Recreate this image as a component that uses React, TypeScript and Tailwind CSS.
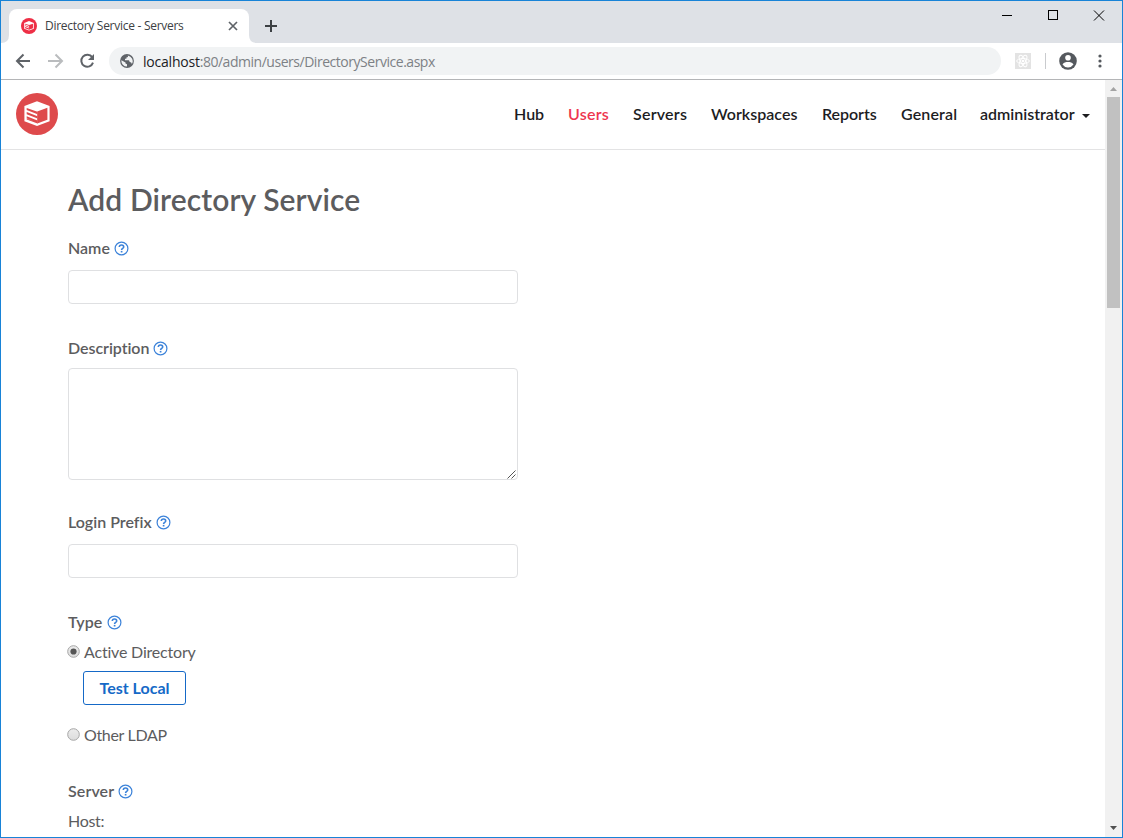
import type { ReactNode } from 'react';

const navItems = [
  { label: 'Hub', width: 'w-[30px]', spacing: 'tracking-[0px]' },
  { label: 'Users', width: 'w-[41px]', spacing: 'tracking-[0.25px]', active: true },
  { label: 'Servers', width: 'w-[54px]', spacing: 'tracking-[0.22px]' },
  { label: 'Workspaces', width: 'w-[87px]', spacing: 'tracking-[0.02px]' },
  { label: 'Reports', width: 'w-[55px]', spacing: 'tracking-[-0.05px]' },
  { label: 'General', width: 'w-[56px]', spacing: 'tracking-[0.14px]' },
];

function Logo({ className, color }: { className: string; color: string }) {
  return (
    <svg className={className} viewBox="0 0 42 42">
      <circle cx="21" cy="21" r="21" fill={color} />
      <path d="M21 8.200 33.600 13V28.200L21 33 8.400 28.200V13Z" fill="#fff" />
      <path d="M21.200 18.600 31.400 14.800V26.700L21.200 30.600Z" fill={color} />
      <path d="M10.700 14.900 21.500 18.700V21.200L10.700 16.900ZM10.700 19 21.500 23.300V25.500L10.700 21.200ZM10.700 23.300 21.500 27.600V30.600L10.700 26.600V25.500L18 28.200 10.700 25.300Z" fill={color} />
    </svg>
  );
}

function HelpIcon() {
  return (
    <svg className="size-[15px] shrink-0" viewBox="0 0 15 15" fill="none" stroke="#3b82d9">
      <circle cx="7.5" cy="7.5" r="6.4" strokeWidth="1.2" />
      <path d="M5.3 6.1c0-1.4.9-2.1 2.2-2.1s2.2.8 2.2 1.9c0 1.5-2.1 1.5-2.1 3" strokeWidth="1.6" />
      <path d="M7.6 9.9v1.6" strokeWidth="1.7" />
    </svg>
  );
}

function FieldLabel({ children, className }: { children: ReactNode; className: string }) {
  return (
    <div className="flex h-6 items-center gap-1 text-[16px] leading-6 font-semibold text-[#5c5c5e]">
      <span className={`shrink-0 whitespace-nowrap ${className}`}>{children}</span>
      <HelpIcon />
    </div>
  );
}

function Radio({ checked = false }: { checked?: boolean }) {
  return (
    <svg className="mb-[2px] -ml-px size-[13px] shrink-0" viewBox="0 0 13 13">
      <defs>
        <linearGradient id="radioFill" x1="0" y1="0" x2="0" y2="1">
          <stop offset="0" stopColor="#ececec" />
          <stop offset="1" stopColor="#dcdcdc" />
        </linearGradient>
      </defs>
      <circle cx="6.5" cy="6.5" r="5.8" fill="url(#radioFill)" stroke="#a6a6a6" />
      {checked && <circle cx="6.5" cy="6.5" r="3.1" fill="#555" />}
    </svg>
  );
}

function TabStrip() {
  return (
    <div className="flex h-[42px] shrink-0 items-end bg-[#dee1e6]">
      <svg className="h-2 w-2 shrink-0" viewBox="0 0 8 8"><path d="M0 8Q8 8 8 0V8Z" fill="#fff" /></svg>
      <div className="flex h-[34px] w-[240px] items-center rounded-t-lg bg-white pl-3">
        <Logo className="size-4 shrink-0" color="#ee2f46" />
        <span className="ml-2 w-[150px] font-['Open_Sans',sans-serif] text-[12px] tracking-[-0.28px] whitespace-nowrap text-[#3c4043]">
          Directory Service - Servers
        </span>
        <svg className="ml-[32px] size-3 shrink-0" viewBox="0 0 12 12" stroke="#5f6368" strokeWidth="1.7">
          <path d="m2 2 8 8M10 2l-8 8" />
        </svg>
      </div>
      <svg className="h-2 w-2 shrink-0" viewBox="0 0 8 8"><path d="M8 8Q0 8 0 0V8Z" fill="#fff" /></svg>
      <svg className="mb-[10px] ml-[7px] size-[14px] shrink-0" viewBox="0 0 14 14" stroke="#3c4043" strokeWidth="2">
        <path d="M7 1v12M1 7h12" />
      </svg>
      <div className="ml-auto flex h-[42px] items-start pt-[8px] pr-[17px]">
        <svg className="h-[13px] w-[103px]" viewBox="0 0 103 13" fill="none" stroke="#000" shapeRendering="crispEdges">
          <path d="M0 6.5h10M46.5 1.5h9v9h-9Z" />
          <path d="m92 1.5 10 10M102 1.5l-10 10" shapeRendering="geometricPrecision" />
        </svg>
      </div>
    </div>
  );
}

function Toolbar() {
  return (
    <div className="flex h-[37px] shrink-0 items-center border-b border-[#b4b5b7] pl-[14px]">
      <svg className="size-4 shrink-0" viewBox="0 0 16 16" fill="none" stroke="#5f6368" strokeWidth="2">
        <path d="M15 8H2M8.5 1.5 2 8l6.500 6.500" />
      </svg>
      <svg className="ml-[17px] size-4 shrink-0" viewBox="0 0 16 16" fill="none" stroke="#babcbe" strokeWidth="2">
        <path d="M0 8h13M7.500 1.500 14 8l-6.500 6.500" />
      </svg>
      <svg className="ml-[15px] size-4 shrink-0" viewBox="0 0 16 16" fill="none" stroke="#5f6368" strokeWidth="2">
        <path d="M13.200 4.200A6 6 0 1 0 14 9.700" />
        <path d="M15 1v6H9Z" fill="#5f6368" stroke="none" />
      </svg>
      <div className="ml-[14px] flex h-7 w-[892px] items-center rounded-full bg-[#f1f3f4] pl-[11px]">
        <svg className="size-[14px] shrink-0" viewBox="0 0 14 14">
          <circle cx="7" cy="7" r="6.900" fill="#5f6368" />
          <path d="M1.400 6.300 5.500 8.500v1l1.500.700v2.400A5.700 5.700 0 0 1 1.400 6.300ZM7.800 1.400 8 3 6.400 3.500v1.300H5v1.500h4l.700 1.700 1.500.600.700 1.300a5.700 5.700 0 0 0-1.500-7.200Z" fill="#f1f3f4" />
        </svg>
        <span className="ml-[9px] font-['Open_Sans',sans-serif] text-[14px] tracking-[-0.22px] whitespace-nowrap text-[#202124]">
          localhost<span className="tracking-[-0.47px] text-[#7d8185]">:80/admin/users/DirectoryService.aspx</span>
        </span>
      </div>
      <svg className="ml-[14px] size-4 shrink-0" viewBox="0 0 16 16">
        <path d="M0 0h16v16H0Z" fill="#e3e3e3" />
        <g fill="none" stroke="#fff" strokeWidth="1">
          <ellipse cx="8" cy="8" rx="6.300" ry="2.500" />
          <ellipse cx="8" cy="8" rx="6.300" ry="2.500" transform="rotate(60 8 8)" />
          <ellipse cx="8" cy="8" rx="6.300" ry="2.500" transform="rotate(120 8 8)" />
        </g>
        <circle cx="8" cy="8" r="1.300" fill="#fff" />
      </svg>
      <div className="ml-[14px] h-4 w-px bg-[#c9cbce]" />
      <svg className="ml-[13px] size-[18px] shrink-0" viewBox="0 0 18 18">
        <circle cx="9" cy="9" r="8.800" fill="#55595e" />
        <circle cx="9" cy="5.800" r="2.800" fill="#fff" />
        <path d="M3.500 12.600c1-1.900 3.400-2.500 5.500-2.500s4.500.600 5.500 2.500A6.500 6.500 0 0 1 9 15.500a6.500 6.500 0 0 1-5.500-2.900Z" fill="#fff" />
      </svg>
      <svg className="ml-[21px] h-[14px] w-[4px] shrink-0" viewBox="0 0 4 14" fill="#55595e">
        <circle cx="2" cy="2" r="1.600" /><circle cx="2" cy="7" r="1.600" /><circle cx="2" cy="12" r="1.600" />
      </svg>
    </div>
  );
}

function Header() {
  return (
    <header className="flex h-[70px] shrink-0 items-start border-b border-[#e3e3e4] pt-[13px] pr-[15px] pl-[15px]">
      <Logo className="size-[42px]" color="#de4a4c" />
      <nav className="mt-[9px] ml-auto flex gap-6 text-[16px] leading-6 font-semibold">
        {navItems.map((item) => (
          <a key={item.label} className={`${item.width} ${item.spacing} whitespace-nowrap ${item.active ? 'text-[#ee3650]' : 'text-[#1d1d1f]'}`}>
            {item.label}
          </a>
        ))}
        <a className="-ml-px flex w-[110px] items-center justify-between whitespace-nowrap text-[#1d1d1f]">
          administrator
          <svg className="mt-[3px] h-[4px] w-2" viewBox="0 0 8 4"><path d="M0 0h8L4 4Z" fill="#1d1d1f" /></svg>
        </a>
      </nav>
    </header>
  );
}

function DirectoryForm() {
  return (
    <main className="flex flex-col items-start pt-[30px] pl-[67px] text-[16px] text-[#5c5c5e]">
      <h1 className="h-10 text-[30px] leading-[39px] font-semibold tracking-[0.09px] whitespace-nowrap">Add Directory Service</h1>
      <div className="mt-4"><FieldLabel className="w-[42px]">Name</FieldLabel></div>
      <input className="mt-[10px] h-[34px] w-[450px] rounded-[4px] border border-[#dfe0e2] px-3 outline-none" />
      <div className="mt-8"><FieldLabel className="w-[81px] tracking-[-0.05px]">Description</FieldLabel></div>
      <div className="mt-2 flex h-[112px] w-[450px] items-end justify-end rounded-[4px] border border-[#dfe0e2]">
        <svg className="h-[9px] w-[10px]" viewBox="0 0 10 9" stroke="#555"><path d="M.5 8.500 8.500.500M4.500 8.500 8.500 4.500" /></svg>
      </div>
      <div className="mt-[30px]"><FieldLabel className="w-[84px]">Login Prefix</FieldLabel></div>
      <input className="mt-[10px] h-[34px] w-[450px] rounded-[4px] border border-[#dfe0e2] px-3 outline-none" />
      <div className="mt-8"><FieldLabel className="w-[35px] tracking-[0.1px]">Type</FieldLabel></div>
      <label className="mt-[6px] flex h-6 items-center gap-1 leading-6">
        <Radio checked />
        <span className="tracking-[-0.19px]">Active Directory</span>
      </label>
      <button className="mt-[7px] ml-[15px] h-[34px] w-[103px] rounded-[3px] border border-[#1569c7] pb-px text-[16px] leading-6 font-bold whitespace-nowrap text-[#1569c7]">
        Test Local
      </button>
      <label className="mt-[18px] flex h-6 items-center gap-1 leading-6">
        <Radio />
        <span className="tracking-[-0.33px]">Other LDAP</span>
      </label>
      <div className="mt-8"><FieldLabel className="w-[46px] tracking-[0.1px]">Server</FieldLabel></div>
      <div className="mt-[6px] h-6 leading-6 tracking-[-0.3px]">Host:</div>
    </main>
  );
}

function Scrollbar() {
  return (
    <div className="flex w-[17px] shrink-0 flex-col items-center bg-[#f1f1f1]">
      <svg className="mt-[7px] h-[4px] w-[7px] shrink-0" viewBox="0 0 7 4"><path d="M0 4h7L3.500 0Z" fill="#a3a3a3" /></svg>
      <div className="mt-[6px] h-[211px] w-[13px] shrink-0 bg-[#c1c1c1]" />
      <svg className="mt-auto mb-[7px] h-[4px] w-[7px] shrink-0" viewBox="0 0 7 4"><path d="M0 0h7L3.500 4Z" fill="#505050" /></svg>
    </div>
  );
}

export default function App() {
  return (
    <div className="flex h-[838px] w-[1123px] flex-col overflow-hidden border border-[#1883d7] bg-white font-['Lato',sans-serif] [font-variant-ligatures:none]">
      <TabStrip />
      <Toolbar />
      <div className="flex min-h-0 grow">
        <div className="min-w-0 grow">
          <Header />
          <DirectoryForm />
        </div>
        <Scrollbar />
      </div>
    </div>
  );
}
